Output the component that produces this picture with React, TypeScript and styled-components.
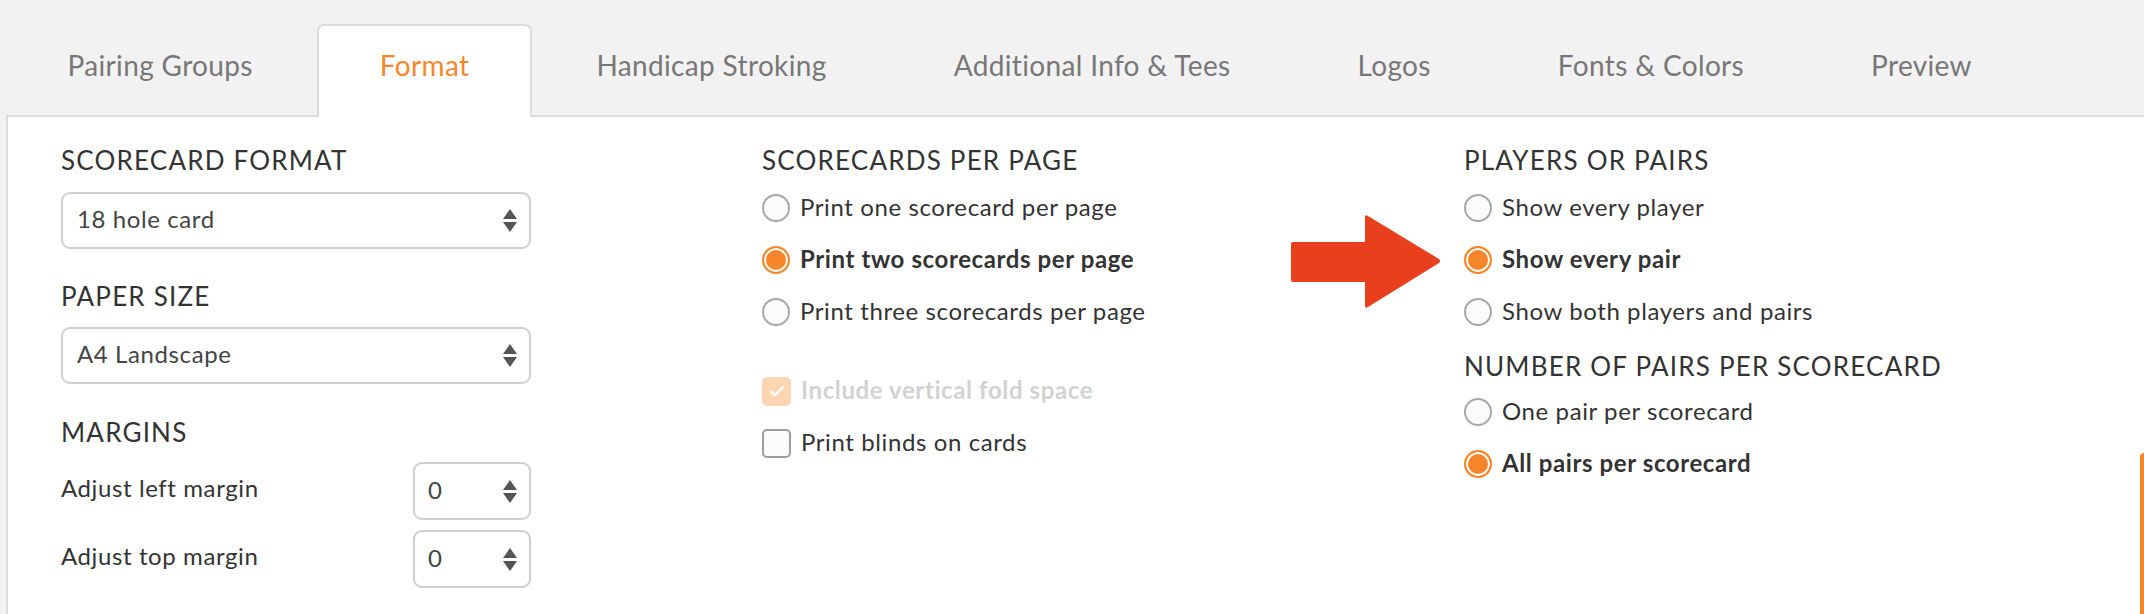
import React from "react";
import styled, { createGlobalStyle, css } from "styled-components";

const GlobalStyle = createGlobalStyle`
  html, body { margin: 0; padding: 0; }
  body {
    background: #f2f2f2;
    font-family: Lato, "Open Sans", Arial, sans-serif;
    color: #333;
    overflow: hidden;
  }
`;

const ORANGE = "#f7862a";

const Page = styled.div`
  width: 2144px;
  height: 614px;
  position: relative;
  overflow: hidden;
`;

const TabBar = styled.div`
  display: flex;
  gap: 2px;
  padding: 24px 0 0 5px;
  height: 91px;
`;

const Tab = styled.div<{ $active?: boolean }>`
  box-sizing: border-box;
  height: 93px;
  padding: 0 60.5px 13px;
  display: flex;
  align-items: center;
  font-size: 28px;
  letter-spacing: 0.35px;
  color: #777;
  border: 2px solid transparent;
  border-bottom: none;
  border-radius: 7px 7px 0 0;
  position: relative;
  z-index: 1;
  ${(p) =>
    p.$active &&
    css`
      background: #fff;
      border-color: #dcdcdc;
      color: ${ORANGE};
    `}
`;

const Panel = styled.div`
  position: relative;
  margin-left: 6px;
  border-left: 2px solid #dcdcdc;
  border-top: 2px solid #dcdcdc;
  background: #fff;
  height: 520px;
  display: grid;
  grid-template-columns: 701px 702px 1fr;
  padding: 27px 0 0 53px;
  box-sizing: border-box;
`;

const Column = styled.div`
  display: flex;
  flex-direction: column;
`;

const Heading = styled.div<{ $mt?: number; $mb?: number }>`
  font-size: 26px;
  line-height: 32px;
  height: 32px;
  letter-spacing: 1.2px;
  text-transform: uppercase;
  color: #333;
  margin-top: ${(p) => p.$mt ?? 0}px;
  margin-bottom: ${(p) => p.$mb ?? 0}px;
`;

const SelectBox = styled.div`
  box-sizing: border-box;
  width: 470px;
  height: 57px;
  border: 2px solid #cfcfcf;
  border-radius: 9px;
  display: flex;
  align-items: center;
  justify-content: space-between;
  padding: 0 12px 0 14px;
  font-size: 24px;
  letter-spacing: 0.6px;
  color: #444;
  & > span:first-child {
    margin-top: -4px;
  }
`;

const Spinner = styled.span`
  display: flex;
  flex-direction: column;
  gap: 3px;
  &::before,
  &::after {
    content: "";
    display: block;
    width: 0;
    height: 0;
    border-left: 7px solid transparent;
    border-right: 7px solid transparent;
  }
  &::before { border-bottom: 10px solid #555; }
  &::after { border-top: 10px solid #555; }
`;

const MarginRow = styled.div<{ $mt: number }>`
  display: flex;
  align-items: center;
  justify-content: space-between;
  width: 470px;
  margin-top: ${(p) => p.$mt}px;
  font-size: 24px;
  letter-spacing: 0.6px;
  color: #333;
  & > span:first-child {
    margin-top: -8px;
  }
`;

const NumberBox = styled(SelectBox)`
  width: 118px;
  height: 58px;
  padding-left: 13px;
`;

const OptionRow = styled.label<{ $bold?: boolean; $disabled?: boolean }>`
  display: flex;
  align-items: center;
  gap: 10px;
  height: 52px;
  font-size: 24px;
  letter-spacing: 0.6px;
  color: ${(p) => (p.$disabled ? "#d2d2d2" : "#333")};
  font-weight: ${(p) => (p.$bold ? 700 : 400)};
  & > span.txt {
    margin-top: -3px;
  }
`;

const Radio = styled.span<{ $checked?: boolean }>`
  box-sizing: border-box;
  width: 28px;
  height: 28px;
  border-radius: 50%;
  flex: none;
  border: 2px solid ${(p) => (p.$checked ? ORANGE : "#a8a8a8")};
  background: ${(p) => (p.$checked ? ORANGE : "#fbfbfb")};
  box-shadow: ${(p) => (p.$checked ? "inset 0 0 0 2px #fff" : "none")};
`;

const Check = styled.span<{ $checked?: boolean; $disabled?: boolean }>`
  box-sizing: border-box;
  width: 29px;
  height: 29px;
  border-radius: 5px;
  flex: none;
  display: flex;
  align-items: center;
  justify-content: center;
  border: 2px solid ${(p) => (p.$checked ? "transparent" : "#9e9e9e")};
  background: ${(p) => (p.$checked ? (p.$disabled ? "#fdd5b3" : ORANGE) : "#fbfbfb")};
`;

const Spacer = styled.div<{ $h: number }>`
  height: ${(p) => p.$h}px;
`;

const Arrow = styled.svg`
  position: absolute;
  left: 1283px;
  top: 97px;
`;

const EdgeTab = styled.div`
  position: absolute;
  right: 0;
  top: 453px;
  width: 4px;
  height: 200px;
  background: ${ORANGE};
  border-radius: 6px 0 0 0;
`;

const tabs = [
  "Pairing Groups",
  "Format",
  "Handicap Stroking",
  "Additional Info & Tees",
  "Logos",
  "Fonts & Colors",
  "Preview",
];

const Txt = ({ children }: { children: React.ReactNode }) => <span className="txt">{children}</span>;

export default function App() {
  return (
    <Page>
      <GlobalStyle />
      <TabBar>
        {tabs.map((t) => (
          <Tab key={t} $active={t === "Format"}>
            {t}
          </Tab>
        ))}
      </TabBar>
      <Panel>
        <Column>
          <Heading $mb={16}>Scorecard Format</Heading>
          <SelectBox>
            <span>18 hole card</span>
            <Spinner />
          </SelectBox>
          <Heading $mt={31} $mb={15}>Paper Size</Heading>
          <SelectBox>
            <span>A4 Landscape</span>
            <Spinner />
          </SelectBox>
          <Heading $mt={32}>Margins</Heading>
          <MarginRow $mt={14}>
            <span>Adjust left margin</span>
            <NumberBox>
              <span>0</span>
              <Spinner />
            </NumberBox>
          </MarginRow>
          <MarginRow $mt={10}>
            <span>Adjust top margin</span>
            <NumberBox>
              <span>0</span>
              <Spinner />
            </NumberBox>
          </MarginRow>
        </Column>
        <Column>
          <Heading $mb={6}>Scorecards per page</Heading>
          <OptionRow>
            <Radio />
            <Txt>Print one scorecard per page</Txt>
          </OptionRow>
          <OptionRow $bold>
            <Radio $checked />
            <Txt>Print two scorecards per page</Txt>
          </OptionRow>
          <OptionRow>
            <Radio />
            <Txt>Print three scorecards per page</Txt>
          </OptionRow>
          <Spacer $h={27} />
          <OptionRow $bold $disabled>
            <Check $checked $disabled>
              <svg width="16" height="12" viewBox="0 0 16 12">
                <path d="M2 6.5 L6 10 L14 2" fill="none" stroke="#fff" strokeWidth="2.4" strokeLinecap="round" strokeLinejoin="round" />
              </svg>
            </Check>
            <Txt>Include vertical fold space</Txt>
          </OptionRow>
          <OptionRow>
            <Check />
            <Txt>Print blinds on cards</Txt>
          </OptionRow>
        </Column>
        <Column>
          <Heading $mb={6}>Players or pairs</Heading>
          <OptionRow>
            <Radio />
            <Txt>Show every player</Txt>
          </OptionRow>
          <OptionRow $bold>
            <Radio $checked />
            <Txt>Show every pair</Txt>
          </OptionRow>
          <OptionRow>
            <Radio />
            <Txt>Show both players and pairs</Txt>
          </OptionRow>
          <Heading $mt={12} $mb={4}>Number of pairs per scorecard</Heading>
          <OptionRow>
            <Radio />
            <Txt>One pair per scorecard</Txt>
          </OptionRow>
          <OptionRow $bold>
            <Radio $checked />
            <Txt>All pairs per scorecard</Txt>
          </OptionRow>
        </Column>
        <Arrow width="152" height="96" viewBox="0 0 152 96">
          <path
            d="M2 28 L74 28 L74 3 Q74 0 77 2 L148 45 Q150 47 148 49 L77 93 Q74 95 74 92 L74 68 L2 68 Q0 68 0 66 L0 30 Q0 28 2 28 Z"
            fill="#e8401c"
          />
        </Arrow>
      </Panel>
      <EdgeTab />
    </Page>
  );
}
